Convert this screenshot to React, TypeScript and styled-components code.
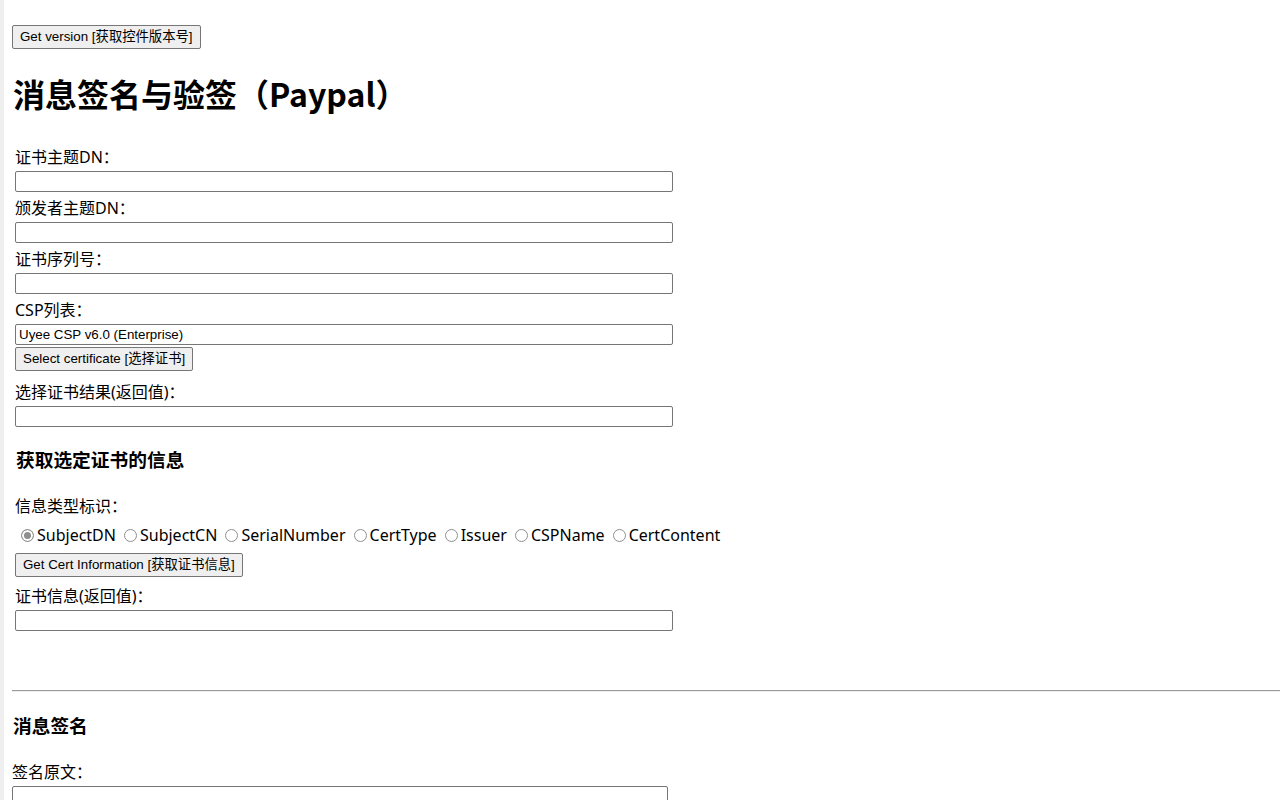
import { styled, createGlobalStyle } from "styled-components";

const GlobalStyle = createGlobalStyle`
    html {
        border-left: 4px solid #efefef;
        background: #ffffff;
    }
    body {
        margin: 8px 0 0 8px;
        font-family: "Noto Sans", "Noto Sans CJK SC", sans-serif;
        font-size: 16px;
        color: #000000;
    }
`

const radios = ["SubjectDN", "SubjectCN", "SerialNumber", "CertType", "Issuer", "CSPName", "CertContent"];

const App = () => {

    return (
        <>
            <GlobalStyle />
            <Page__Container>
                <Page__Button>Get version [获取控件版本号]</Page__Button>
                <Page__Title>消息签名与验签（Paypal）</Page__Title>

                <Cert__Section>
                    <Field__Group>
                        <Field__Label>证书主题DN：</Field__Label>
                        <Field__Input type="text" defaultValue="" />
                    </Field__Group>
                    <Field__Group>
                        <Field__Label>颁发者主题DN：</Field__Label>
                        <Field__Input type="text" defaultValue="" />
                    </Field__Group>
                    <Field__Group>
                        <Field__Label>证书序列号：</Field__Label>
                        <Field__Input type="text" defaultValue="" />
                    </Field__Group>
                    <Field__Group>
                        <Field__Label>CSP列表：</Field__Label>
                        <Field__Input type="text" defaultValue="Uyee CSP v6.0 (Enterprise)" />
                        <Page__Button>Select certificate [选择证书]</Page__Button>
                    </Field__Group>
                    <Field__Group $top={5}>
                        <Field__Label>选择证书结果(返回值)：</Field__Label>
                        <Field__Input type="text" defaultValue="" />
                    </Field__Group>

                    <Section__Title $top={14}>获取选定证书的信息</Section__Title>

                    <Field__Label $top={21}>信息类型标识：</Field__Label>
                    <Radio__Row>
                        {radios.map((name, i) => (
                            <Radio__Item key={name}>
                                <Radio__Input type="radio" name="infoType" defaultChecked={i === 0} />
                                {name}
                            </Radio__Item>
                        ))}
                    </Radio__Row>
                    <Page__Button $top={6}>Get Cert Information [获取证书信息]</Page__Button>
                    <Field__Group $top={7}>
                        <Field__Label>证书信息(返回值)：</Field__Label>
                        <Field__Input type="text" defaultValue="" />
                    </Field__Group>
                </Cert__Section>

                <Page__Rule />

                <Sign__Section>
                    <Section__Title $top={19}>消息签名</Section__Title>
                    <Field__Group $top={21}>
                        <Field__Label>签名原文：</Field__Label>
                        <Field__Input type="text" defaultValue="" $width={656} />
                    </Field__Group>
                </Sign__Section>
            </Page__Container>
        </>
    )
}

const Page__Container = styled.div`
    padding-top: 17px;
    display: flex;
    flex-direction: column;
    align-items: flex-start;
`

const Page__Button = styled.button<{ $top?: number }>`
    margin-top: ${p => p.$top ?? 0}px;
    height: 24px;
    padding: 1px 7px;
    border: 1px solid #767676;
    border-radius: 2px;
    background-color: #efefef;
    color: #000000;
    font-family: "Liberation Sans", "Noto Sans CJK SC", sans-serif;
    font-size: 13.33px;
    line-height: 16px;
    white-space: nowrap;
`

const Page__Title = styled.h1`
    margin: 21px 0 0 1px;
    font-family: "Noto Sans CJK SC", sans-serif;
    font-size: 32px;
    font-weight: 700;
    line-height: 46px;
`

const Cert__Section = styled.section`
    margin-top: 29px;
    padding-left: 3px;
    display: flex;
    flex-direction: column;
    align-items: flex-start;
`

const Sign__Section = styled.section`
    display: flex;
    flex-direction: column;
    align-items: flex-start;
`

const Field__Group = styled.div<{ $top?: number }>`
    margin-top: ${p => p.$top ?? 0}px;
    margin-bottom: 4px;
    display: flex;
    flex-direction: column;
    align-items: flex-start;
    gap: 2px;
`

const Field__Label = styled.label<{ $top?: number }>`
    margin-top: ${p => p.$top ?? 0}px;
    display: block;
    height: 24px;
    line-height: 24px;
    font-size: 16px;
    white-space: nowrap;
`

const Field__Input = styled.input<{ $width?: number }>`
    box-sizing: border-box;
    width: ${p => p.$width ?? 658}px;
    height: 21px;
    margin: 0;
    padding: 1px 3px;
    border: 1px solid #767676;
    border-radius: 2px;
    background: #ffffff;
    color: #000000;
    font-family: "Liberation Sans", "Noto Sans CJK SC", sans-serif;
    font-size: 13.33px;
    outline: none;
`

const Section__Title = styled.h3<{ $top?: number }>`
    margin: ${p => p.$top ?? 0}px 0 0 1px;
    font-family: "Noto Sans CJK SC", sans-serif;
    font-size: 18.72px;
    font-weight: 700;
    line-height: 28px;
`

const Radio__Row = styled.div`
    margin-top: 5px;
    display: flex;
    align-items: center;
    height: 24px;
    font-size: 16px;
    white-space: nowrap;
`

const Radio__Item = styled.label`
    display: inline-flex;
    align-items: center;
    margin-right: 2px;
`

const Radio__Input = styled.input`
    appearance: none;
    box-sizing: border-box;
    width: 13px;
    height: 13px;
    margin: 0 3px 0 6px;
    border: 1px solid #8f8f8f;
    border-radius: 50%;
    background: #ffffff;

    &:checked {
        background: #8f8f8f;
        box-shadow: inset 0 0 0 2px #ffffff;
    }
`

const Page__Rule = styled.hr`
    align-self: stretch;
    margin: 55px 0 0 0;
    height: 0;
    border-style: solid;
    border-width: 1px 0;
    border-top-color: #9a9a9a;
    border-bottom-color: #eeeeee;
`

export default App;
